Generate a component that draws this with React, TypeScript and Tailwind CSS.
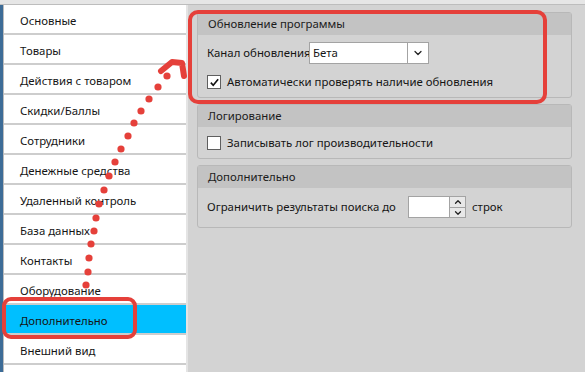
import { ChevronDown, ChevronUp } from "lucide-react";

const items = [
  "Основные",
  "Товары",
  "Действия с товаром",
  "Скидки/Баллы",
  "Сотрудники",
  "Денежные средства",
  "Удаленный контроль",
  "База данных",
  "Контакты",
  "Оборудование",
  "Дополнительно",
  "Внешний вид",
  "",
];

const dots: [number, number][] = [
  [167, 76], [158, 87], [149, 99], [141, 111], [134, 123], [128, 136],
  [121, 149], [115, 162], [109, 176], [104, 190], [99, 204], [96, 218],
  [94, 231], [91, 244], [89, 258], [88, 272], [86, 285],
];

function Check({ checked }: { checked?: boolean }) {
  return (
    <span className="flex h-[14px] w-[14px] shrink-0 items-center justify-center border border-[#5f5f5f] bg-white">
      {checked && (
        <svg viewBox="0 0 12 12" className="h-[11px] w-[11px]" fill="none" stroke="#111" strokeWidth={1.8}>
          <path d="M2 6.2l2.6 2.8L10 2.5" />
        </svg>
      )}
    </span>
  );
}

function Group({ title, children, body }: { title: string; children: React.ReactNode; body: string }) {
  return (
    <div className="rounded-[3px] border border-[#b8b8b8]">
      <div className="flex h-[22px] items-center bg-[#c3c3c3] px-[10px] text-[#1c1c1c]">{title}</div>
      <div className={body}>{children}</div>
    </div>
  );
}

export default function App() {
  return (
    <div className="relative h-[372px] w-[585px] overflow-hidden whitespace-nowrap bg-[#d3d3d3] font-['Noto_Sans',sans-serif] text-[11.4px] text-[#151515]">
      <div className="h-[5px] border-b border-[#bdbdbd] bg-[#e6e6e6]" />
      <div className="flex h-[367px]">
        <div className="w-[3px] bg-[#3d6c97]" />
        <div className="w-px bg-[#bcbcbc]" />
        <div className="w-[182px] bg-white">
          {items.map((label, i) => (
            <div
              key={i}
              className={`flex h-[30px] items-center border-b-2 border-[#cdcdcd] pl-[16px] pt-[4px] ${
                i === 10 ? "bg-[#00bfff]" : "bg-white"
              }`}
            >
              {label}
            </div>
          ))}
        </div>
        <div className="w-[2px] bg-[#e4e4e4]" />
        <div className="flex flex-1 flex-col gap-[6px] pl-[9px] pr-[13px] pt-[7px]">
          <Group title="Обновление программы" body="flex flex-col gap-[10px] px-[9px] pb-[7px] pt-[7px]">
            <div className="flex items-center">
              <span className="w-[102px]">Канал обновления</span>
              <div className="flex h-[22px] w-[120px] items-center border border-[#a3a3a3] bg-white">
                <span className="flex-1 pl-[3px]">Бета</span>
                <span className="flex h-full w-[21px] items-center justify-center border-l border-[#a3a3a3]">
                  <ChevronDown size={12} strokeWidth={2.5} color="#222" />
                </span>
              </div>
            </div>
            <label className="flex h-[16px] items-center gap-[6px]">
              <Check checked />
              Автоматически проверять наличие обновления
            </label>
          </Group>
          <Group title="Логирование" body="px-[9px] pb-[7px] pt-[8px]">
            <label className="flex h-[16px] items-center gap-[6px]">
              <Check />
              Записывать лог производительности
            </label>
          </Group>
          <Group title="Дополнительно" body="flex items-center px-[9px] pb-[9px] pt-[8px]">
            <span className="w-[201px]">Ограничить результаты поиска до</span>
            <div className="flex h-[22px] items-stretch border border-[#a3a3a3] bg-white">
              <span className="w-[40px]" />
              <div className="flex w-[16px] flex-col border-l border-[#a3a3a3] bg-[#e8e8e8]">
                <span className="flex flex-1 items-center justify-center border-b border-[#a3a3a3]">
                  <ChevronUp size={10} strokeWidth={3} color="#222" />
                </span>
                <span className="flex flex-1 items-center justify-center">
                  <ChevronDown size={10} strokeWidth={3} color="#222" />
                </span>
              </div>
            </div>
            <span className="pl-[6px]">строк</span>
          </Group>
        </div>
      </div>

      <svg className="pointer-events-none absolute left-0 top-0" width={585} height={372} viewBox="0 0 585 372">
        <rect x={190} y={12} width={355} height={90} rx={8} fill="none" stroke="#e5403a" strokeWidth={4} />
        <rect x={4} y={299} width={131} height={38} rx={7} fill="none" stroke="#e5403a" strokeWidth={4} />
        <polyline
          points="161,71 172,62 182,63 184,76"
          fill="none"
          stroke="#e5403a"
          strokeWidth={6}
          strokeLinecap="round"
          strokeLinejoin="round"
        />
        {dots.map(([cx, cy], i) => (
          <circle key={i} cx={cx} cy={cy} r={3.6} fill="#e5403a" />
        ))}
      </svg>
    </div>
  );
}
